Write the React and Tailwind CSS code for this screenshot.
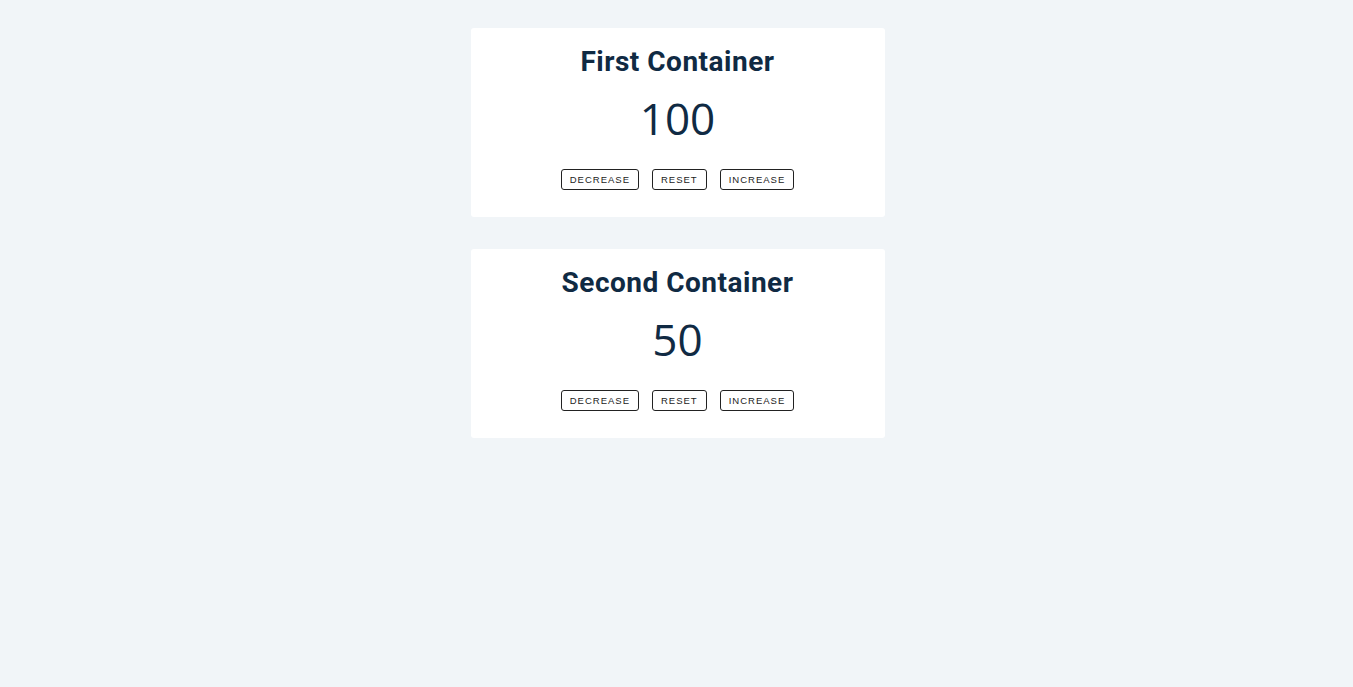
export default function App() {
  const Card = ({ title, value }) => (
    <div className="w-[414px] bg-white rounded-[3px] pt-4 pb-[27px] text-center">
      <h3 className="font-['Roboto',sans-serif] font-bold text-[28px] leading-[1.25] tracking-[0.5px] text-[#102a43] mb-3">
        {title}
      </h3>
      <h1 className="font-['Open_Sans',sans-serif] text-[44px] leading-[1.25] text-[#102a43] mb-[23px]">
        {value}
      </h1>
      <div className="flex justify-center gap-[13px]">
        {['decrease', 'reset', 'increase'].map((b) => (
          <button
            key={b}
            className="font-['Liberation_Sans',Arial,sans-serif] uppercase text-[9.5px] tracking-[1px] text-[#222] border border-[#222] rounded-[3px] bg-transparent h-[21px] px-[8px] leading-none"
          >
            {b}
          </button>
        ))}
      </div>
    </div>
  );
  return (
    <div className="min-h-[687px] bg-[#f1f5f8] pt-[28px] pl-[2px] flex flex-col items-center gap-[32px]">
      <Card title="First Container" value="100" />
      <Card title="Second Container" value="50" />
    </div>
  );
}
